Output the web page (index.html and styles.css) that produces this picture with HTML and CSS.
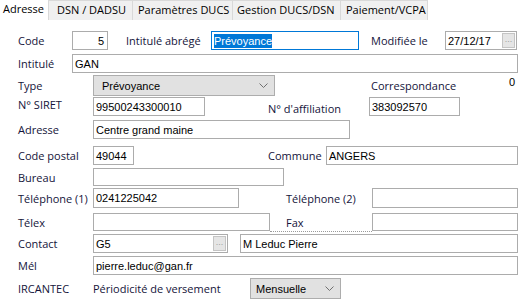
FILE: index.html
```html
<!DOCTYPE html>
<html lang="fr">
<head>
<meta charset="utf-8">
<title>Adresse</title>
<link rel="stylesheet" href="styles.css">
</head>
<body>
<div class="tabs">
  <div class="tab active">Adresse</div>
  <div class="tab t2">DSN / DADSU</div>
  <div class="tab t3">Paramètres DUCS</div>
  <div class="tab t4">Gestion DUCS/DSN</div>
  <div class="tab t5">Paiement/VCPA</div>
</div>
<div class="form">
  <div class="row r1">
    <span class="lbl w54">Code</span>
    <div class="box code">5</div>
    <span class="lbl abrege">Intitulé abrégé</span>
    <div class="box focus abr"><span class="sel">Prévoyance</span></div>
    <span class="lbl modif">Modifiée le</span>
    <div class="box date"><span class="dtxt">27/12/17</span><span class="dots">...</span></div>
  </div>
  <div class="row r2">
    <span class="lbl w54">Intitulé</span>
    <div class="box intit">GAN</div>
  </div>
  <div class="row r3">
    <span class="lbl w75">Type</span>
    <div class="combo type"><span>Prévoyance</span><svg class="chev" width="9" height="5" viewBox="0 0 9 5"><polyline points="0.5,0.5 4.5,4.5 8.5,0.5" fill="none" stroke="#707070" stroke-width="1"/></svg></div>
    <span class="lbl corr">Correspondance</span>
    <span class="zero">0</span>
  </div>
  <div class="row r4">
    <span class="lbl w75 up2">N° SIRET</span>
    <div class="box siret">99500243300010</div>
    <span class="lbl affil">N° d'affiliation</span>
    <div class="box affiln">383092570</div>
  </div>
  <div class="row r5">
    <span class="lbl w75">Adresse</span>
    <div class="box adr">Centre grand maine</div>
  </div>
  <div class="row r6">
    <span class="lbl w75">Code postal</span>
    <div class="box cp">49044</div>
    <span class="lbl commune">Commune</span>
    <div class="box ville">ANGERS</div>
  </div>
  <div class="row r7">
    <span class="lbl w75">Bureau</span>
    <div class="box bureau"></div>
  </div>
  <div class="row r8">
    <span class="lbl w75">Téléphone (1)</span>
    <div class="box tel1">0241225042</div>
    <span class="lbl tel2l">Téléphone (2)</span>
    <div class="box tel2"></div>
  </div>
  <div class="row r9">
    <span class="lbl w75">Télex</span>
    <div class="box telex"></div>
    <span class="lbl faxl">Fax</span>
    <div class="box fax"></div>
  </div>
  <div class="row r10">
    <span class="lbl w75">Contact</span>
    <div class="box contact"><span class="ctxt">G5</span><span class="dots">...</span></div>
    <div class="box cname">M Leduc Pierre</div>
  </div>
  <div class="row r11">
    <span class="lbl w75">Mél</span>
    <div class="box mel">pierre.leduc@gan.fr</div>
  </div>
  <div class="row r12">
    <span class="lbl w75">IRCANTEC</span>
    <span class="lbl perio">Périodicité de versement</span>
    <div class="combo mens"><span>Mensuelle</span><svg class="chev" width="9" height="5" viewBox="0 0 9 5"><polyline points="0.5,0.5 4.5,4.5 8.5,0.5" fill="none" stroke="#707070" stroke-width="1"/></svg></div>
  </div>
</div>
</body>
</html>
```
FILE: styles.css
```css
* { box-sizing: border-box; }
html, body { margin: 0; padding: 0; background: #fff; }
body { width: 521px; height: 304px; overflow: hidden; font-family: "Open Sans", "Noto Sans", sans-serif; font-size: 11px; color: #14143a; }

.tabs { display: flex; height: 20px; align-items: flex-end; }
.tab { height: 20px; background: #f0f0f0; border-right: 1px solid #d9d9d9; border-top: 1px solid #d9d9d9; color: #000; font-size: 11px; line-height: 18px; padding-left: 5px; }
.tab.active { background: #fff; width: 49px; padding-left: 3px; border-top: none; border-right: 1px solid #d9d9d9; }
.t2 { width: 84px; padding-left: 8px; }
.t3 { width: 100px; padding-left: 5px; }
.t4 { width: 108px; padding-left: 4px; }
.t5 { width: 87px; padding-left: 5px; }

.form { display: flex; flex-direction: column; padding-left: 18px; }
.row { display: flex; align-items: center; }
.r1 { margin-top: 11px; height: 19px; }
.r2 { margin-top: 4px; height: 19px; }
.r3 { margin-top: 2px; height: 21px; }
.r4 { margin-top: 1px; height: 19px; }
.r5 { margin-top: 4px; height: 19px; }
.r6 { margin-top: 7px; height: 19px; }
.r7 { margin-top: 3px; height: 18px; }
.r8 { margin-top: 2px; height: 20px; }
.r9 { margin-top: 5px; height: 18px; }
.r10 { margin-top: 3px; height: 19px; }
.r11 { margin-top: 3px; height: 19px; }
.r12 { margin-top: 3px; height: 21px; }

.lbl { white-space: nowrap; flex: none; }
.w54 { width: 54px; }
.w75 { width: 75px; }
.up2 { position: relative; top: -2px; }

.box { height: 100%; border: 1px solid #acacac; background: #fff; font-family: "Liberation Sans", Arial, sans-serif; font-size: 11px; color: #000; padding-left: 2px; display: flex; align-items: center; flex: none; white-space: nowrap; }
.box.focus { border-color: #0078d7; }
.sel { background: #0078d7; color: #fff; height: 14px; line-height: 14px; }

.code { width: 36px; justify-content: flex-end; padding-right: 3px; }
.abrege { margin-left: 18px; width: 85px; }
.abr { width: 148px; }
.modif { margin-left: 12px; width: 74px; }
.date { width: 72px; justify-content: space-between; padding-right: 1px; }
.dots { width: 13px; height: 15px; background: #e5e5e5; border: 1px solid #c4c4c4; color: #a0a0a0; font-size: 9px; line-height: 10px; text-align: center; }
.intit { width: 446px; }

.combo { height: 100%; background: #e1e1e1; border: 1px solid #adadad; color: #000; font-family: "Liberation Sans", Arial, sans-serif; font-size: 11px; display: flex; align-items: center; justify-content: space-between; padding: 0 6px 0 8px; flex: none; }
.type { width: 182px; }
.corr { margin-left: 96px; }
.zero { margin-left: 53px; align-self: flex-start; margin-top: 0; line-height: 14px; font-family: "Liberation Sans", Arial, sans-serif; color: #000; }

.siret { width: 112px; }
.affil { margin-left: 63px; width: 101px; position: relative; top: 2px; }
.affiln { width: 91px; }
.adr { width: 257px; }
.cp { width: 41px; }
.commune { margin-left: 134px; width: 58px; }
.ville { width: 192px; }
.bureau { width: 191px; }
.tel1 { width: 146px; }
.tel2l { margin-left: 47px; width: 86px; }
.tel2 { width: 146px; }
.telex { width: 177px; }
.faxl { width: 102px; height: 19px; align-self: flex-start; padding-left: 16px; display: flex; align-items: center; border-bottom: 1px dotted #9a9a9a; }
.fax { width: 146px; }
.contact { width: 135px; justify-content: space-between; padding-right: 1px; }
.cname { margin-left: 12px; width: 278px; }
.mel { width: 425px; }
.perio { width: 157px; }
.mens { width: 91px; padding-left: 5px; }
```
